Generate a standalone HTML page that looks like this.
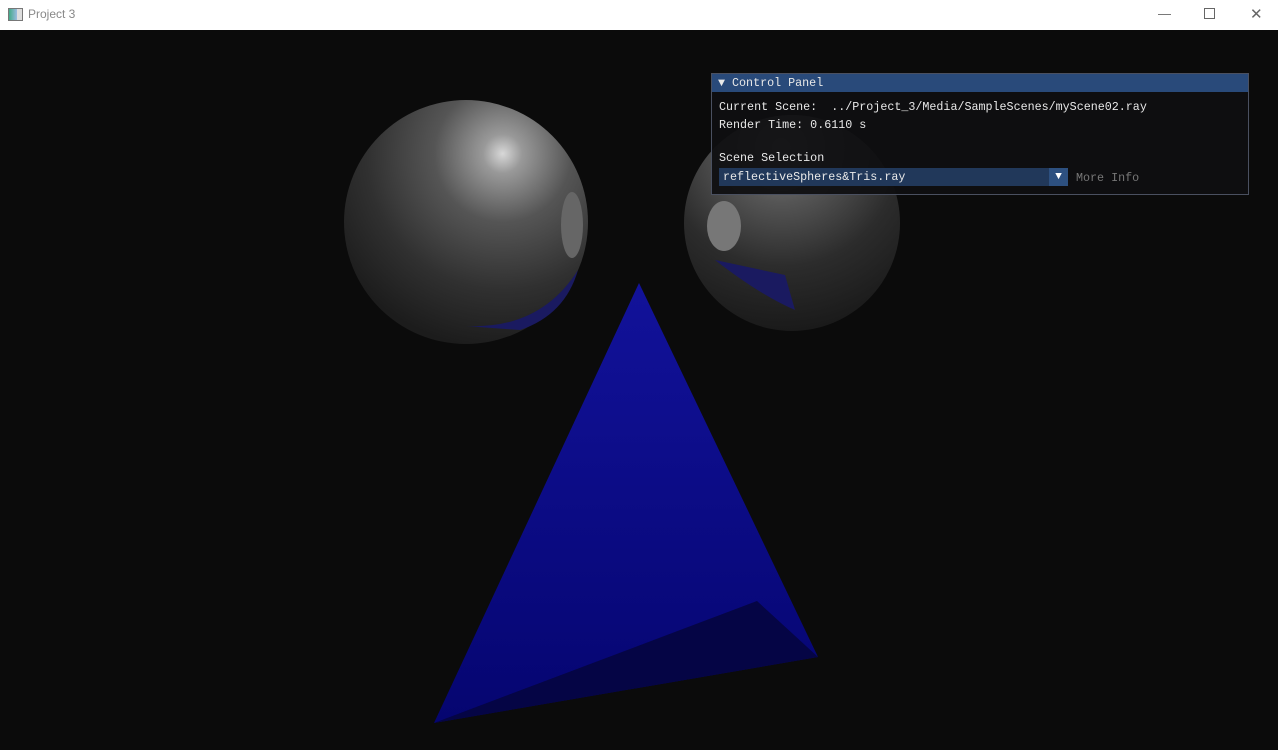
<!DOCTYPE html>
<html><head><style>
body{margin:0;width:1278px;height:750px;overflow:hidden;background:#0b0b0b;font-family:"Liberation Sans",sans-serif;position:relative}
.tb{position:absolute;left:0;top:0;width:1278px;height:30px;background:#fff}
.tb .t{position:absolute;left:28px;top:7px;font-size:12px;color:#888}
.ic{position:absolute;left:8px;top:8px;width:13px;height:11px;border:1px solid #777;background:linear-gradient(90deg,#4a8 0,#9bd 60%,#ddd 60%)}
.ctl{position:absolute;top:6px;font-size:13px;color:#666}
.p{position:absolute;left:711px;top:73px;width:536px;height:120px;border:1px solid #4a5060;background:rgba(15,15,17,0.94);font-family:"Liberation Mono",monospace;font-size:11.7px;color:#e8e8e8}
.h{height:18px;background:#294a7a;line-height:18px;padding-left:6px}
.l{position:absolute;left:7px;white-space:pre}
.dd{position:absolute;left:7px;top:94px;width:349px;height:18px;background:#21385a}
.ar{position:absolute;right:0;top:0;width:19px;height:18px;background:#2d5080;color:#fff;text-align:center;line-height:18px;font-size:11px}
</style></head><body>
<div class="tb"><div class="ic"></div><div class="t">Project 3</div>
<div class="ctl" style="left:1158px">&#8212;</div><div class="ctl" style="left:1204px;top:8px;width:9px;height:9px;border:1px solid #666"></div><div class="ctl" style="left:1250px;top:5px;font-size:15px">&#10005;</div></div>
<svg style="position:absolute;left:0;top:30px" width="1278" height="720">
<defs>
<radialGradient id="s1" cx="0.65" cy="0.22" r="0.8"><stop offset="0" stop-color="#d8d8d8"/><stop offset="0.1" stop-color="#999"/><stop offset="0.35" stop-color="#555"/><stop offset="0.7" stop-color="#303030"/><stop offset="1" stop-color="#1c1c1c"/></radialGradient>
<radialGradient id="s2" cx="0.45" cy="0.15" r="0.85"><stop offset="0" stop-color="#888"/><stop offset="0.3" stop-color="#555"/><stop offset="0.65" stop-color="#2c2c2c"/><stop offset="1" stop-color="#1a1a1a"/></radialGradient>
<linearGradient id="tr" x1="0" y1="0" x2="0" y2="1"><stop offset="0" stop-color="#12129a"/><stop offset="1" stop-color="#050570"/></linearGradient>
</defs>
<circle cx="466" cy="192" r="122" fill="url(#s1)"/>
<path d="M465 296 Q540 300 578 240 Q565 285 520 300 Z" fill="#1a1a60"/>
<ellipse cx="572" cy="195" rx="11" ry="33" fill="#666"/>
<circle cx="792" cy="193" r="108" fill="url(#s2)"/>
<path d="M715 230 Q760 265 795 280 L785 245 Z" fill="#1a1a60"/>
<ellipse cx="724" cy="196" rx="17" ry="25" fill="#777"/>
<polygon points="639,253 818,627 434,693" fill="url(#tr)"/>
<polygon points="757,571 818,627 434,693" fill="#050545"/>
</svg>
<div class="p">
<div class="h">▼ Control Panel</div>
<div class="l" style="top:26px">Current Scene:  ../Project_3/Media/SampleScenes/myScene02.ray</div>
<div class="l" style="top:44px">Render Time: 0.6110 s</div>
<div class="l" style="top:77px">Scene Selection</div>
<div class="dd"><span style="position:absolute;left:4px;top:2px">reflectiveSpheres&amp;Tris.ray</span><div class="ar">▼</div></div>
<div class="l" style="top:97px;left:364px;color:#777">More Info</div>
</div>
</body></html>
